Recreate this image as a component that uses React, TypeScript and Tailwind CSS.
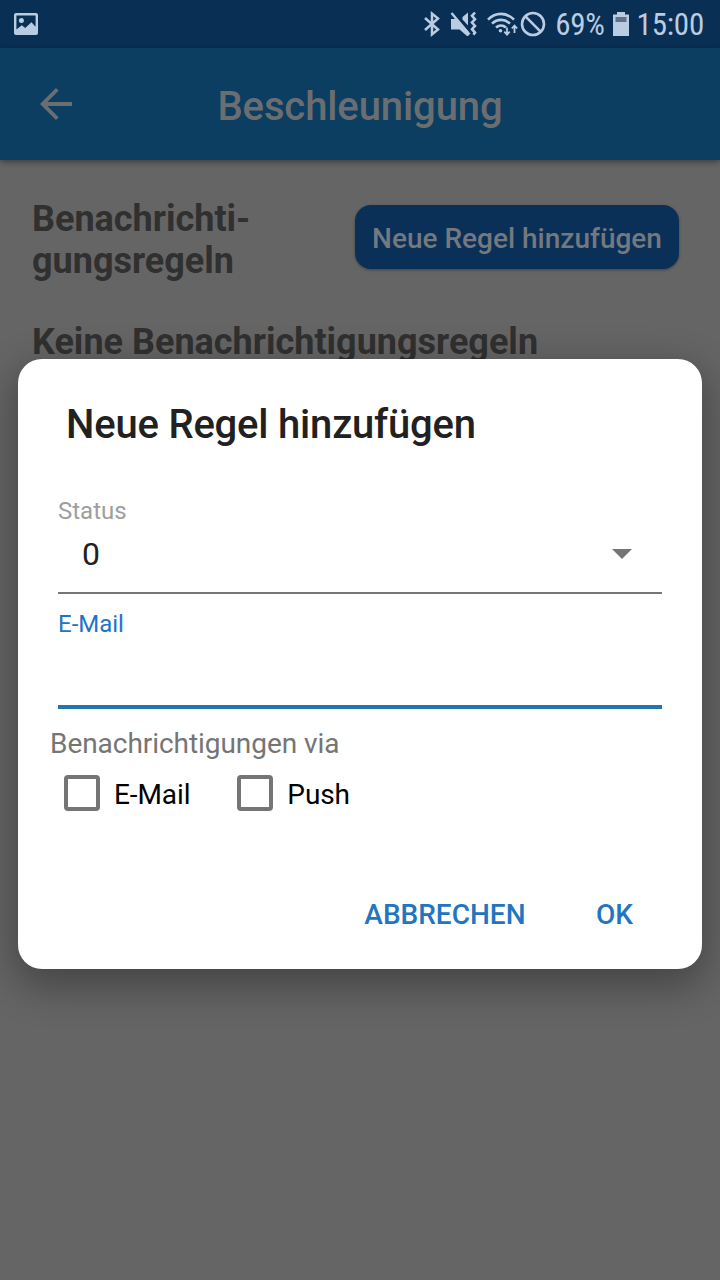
import { useState } from "react";

function StatusBar() {
  return (
    <div className="flex h-12 items-center justify-between bg-[#092f54] pr-4 pl-[14px] text-[#b9cce2]">
      <svg width="24" height="22" viewBox="0 0 24 22" fill="currentColor">
        <path
          fillRule="evenodd"
          d="M2 0h20a2 2 0 0 1 2 2v18a2 2 0 0 1-2 2H2a2 2 0 0 1-2-2V2a2 2 0 0 1 2-2zm.4 2.4v14.2l5.4-4.4 3.4 2.8 6.2-5.8 4.2 4.6V2.4z"
        />
        <circle cx="7.4" cy="7.4" r="2.5" />
      </svg>

      <div className="flex h-full items-center">
        <svg width="18" height="26" viewBox="0 0 18 26" fill="none" stroke="currentColor" strokeWidth="2.5">
          <path d="M2 7 15 18.500 9 23.400V2.600L15 7.500 2 19" />
        </svg>
        <svg className="ml-[9px]" width="28" height="26" viewBox="0 0 28 26" fill="currentColor">
          <path d="M1 8h6.500L18.500 20.500V25h-1.500L9.500 18.500H1z" />
          <path d="M12.500 6 18 1.500v13L12.500 8.500z" />
          <path d="M1.500 2 19.500 23.500" stroke="currentColor" strokeWidth="2.400" />
          <path
            d="M25 1.500 22 4.800 25 8.200l-3 3.300 3 3.400-3 3.300 3 3.400-1.600 2.200"
            fill="none"
            stroke="currentColor"
            strokeWidth="2.600"
          />
        </svg>
        <svg className="ml-2" width="34" height="26" viewBox="0 0 34 26" fill="none" stroke="currentColor">
          <path d="M2 8.600C9.500 1 20.500 1 28 8.600" strokeWidth="2.600" />
          <path d="M6 12.600c5.400-5 12.600-5 18 0" strokeWidth="2.600" />
          <path d="M10 16.600c3-2.600 7-2.600 10 0" strokeWidth="2.600" />
          <circle cx="14.500" cy="19.800" r="1.800" fill="currentColor" stroke="none" />
          <path d="M21 16.500v7M18.300 20.700l2.700 2.900 2.700-2.900M28.500 22v-7.500M25.800 17.500l2.700-2.900 2.700 2.900" strokeWidth="1.800" />
        </svg>
        <svg width="26" height="26" viewBox="0 0 26 26" fill="none" stroke="currentColor" strokeWidth="2.6">
          <circle cx="13" cy="13" r="11" />
          <path d="M5.200 5.200l15.600 15.600" />
        </svg>
        <span className="ml-[9px] pt-px font-['Roboto_Condensed',Roboto,sans-serif] text-[31px] leading-none tracking-[-0.3px] font-stretch-condensed">
          69%
        </span>
        <svg className="ml-2" width="16" height="24" viewBox="0 0 16 24" fill="currentColor">
          <path d="M4 0h8v2.500h4V24H0V2.500h4z" />
          <path d="M2.500 5h11v5h-11z" fill="#5f7288" />
        </svg>
        <span className="ml-2 pt-px font-['Roboto_Condensed',Roboto,sans-serif] text-[31px] leading-none tracking-[-0.2px] font-stretch-condensed">
          15:00
        </span>
      </div>
    </div>
  );
}

function AppHeader() {
  return (
    <header className="relative flex h-28 items-center bg-[#0c3e61] px-10 text-[#6b6e70] shadow-[0_2px_6px_rgba(0,0,0,0.4)]">
      <svg width="32" height="32" viewBox="0 0 32 32" fill="none" stroke="currentColor" strokeWidth="3.8">
        <path d="M32 16H3M17.300 1.400 2.700 16l14.600 14.600" />
      </svg>
      <h1 className="mr-8 flex-1 pt-[5px] text-center text-[40px] leading-none font-medium tracking-[-0.1px]">
        Beschleunigung
      </h1>
    </header>
  );
}

interface CheckboxProps {
  label: string;
  checked: boolean;
  onChange: () => void;
}

function Checkbox({ label, checked, onChange }: CheckboxProps) {
  return (
    <button role="checkbox" aria-checked={checked} onClick={onChange} className="flex items-center gap-[14px]">
      <span className="flex size-9 items-center justify-center rounded-[4px] border-4 border-[#757575]">
        {checked && <span className="size-5 bg-[#1f74c4]" />}
      </span>
      <span className="pt-[3px] text-[28px] leading-[33px] tracking-[-0.1px] text-black">{label}</span>
    </button>
  );
}

function RuleDialog() {
  const [email, setEmail] = useState("");
  const [viaEmail, setViaEmail] = useState(false);
  const [viaPush, setViaPush] = useState(false);

  return (
    <div
      role="dialog"
      className="absolute inset-x-[18px] top-[359px] flex h-[610px] flex-col rounded-3xl bg-white px-10 shadow-[0_14px_40px_4px_rgba(0,0,0,0.32)]"
    >
      <h2 className="mt-[42px] ml-2 text-[40px] leading-[48px] font-medium tracking-[-0.2px] text-[#212121]">
        Neue Regel hinzufügen
      </h2>

      <div className="mt-12 flex flex-col border-b-2 border-[#757575]">
        <span className="text-2xl leading-7 text-[#9e9e9e]">Status</span>
        <div className="mt-[9px] flex h-[58px] items-start justify-between pr-[30px] pl-6">
          <span className="text-[32px] leading-10 text-[#212121]">0</span>
          <svg className="mt-[15px]" width="20" height="10" viewBox="0 0 20 10" fill="#757575">
            <path d="M0 0h20L10 10z" />
          </svg>
        </div>
      </div>

      <label className="mt-4 flex flex-col border-b-4 border-[#2375b0]">
        <span className="text-2xl leading-7 text-[#2375c4]">E-Mail</span>
        <input
          type="email"
          value={email}
          onChange={(e) => setEmail(e.target.value)}
          className="h-[67px] text-[32px] text-[#212121] outline-none"
        />
      </label>

      <p className="mt-[19px] -ml-2 text-[28px] leading-8 tracking-[-0.05px] text-[#757575]">Benachrichtigungen via</p>
      <div className="mt-[15px] ml-1.5 flex h-9 items-center gap-[47px]">
        <Checkbox label="E-Mail" checked={viaEmail} onChange={() => setViaEmail(!viaEmail)} />
        <Checkbox label="Push" checked={viaPush} onChange={() => setViaPush(!viaPush)} />
      </div>

      <div className="mt-[88px] mr-[29px] flex justify-end gap-[70.5px] text-[28px] leading-8 font-medium text-[#2375c2]">
        <button>ABBRECHEN</button>
        <button>OK</button>
      </div>
    </div>
  );
}

export default function App() {
  return (
    <div className="relative flex h-[1280px] w-[720px] flex-col overflow-hidden bg-[#656565] font-[Roboto,sans-serif]">
      <StatusBar />
      <AppHeader />

      <main className="flex flex-col px-8 pt-[38px] text-4xl leading-[42px] font-bold text-[#303030]">
        <div className="flex items-start justify-between">
          <h2 className="leading-[42px]">
            Benachrichti-
            <br />
            gungsregeln
          </h2>
          <button className="mt-[7px] mr-[9px] h-16 w-[324px] rounded-2xl bg-[#0a3058] pt-[3px] text-[28px] leading-none font-medium text-[#74797f] shadow-[0_1px_3px_rgba(0,0,0,0.35)]">
            Neue Regel hinzufügen
          </button>
        </div>
        <h2 className="mt-[39px] leading-[42px]">Keine Benachrichtigungsregeln</h2>
      </main>

      <RuleDialog />
    </div>
  );
}
